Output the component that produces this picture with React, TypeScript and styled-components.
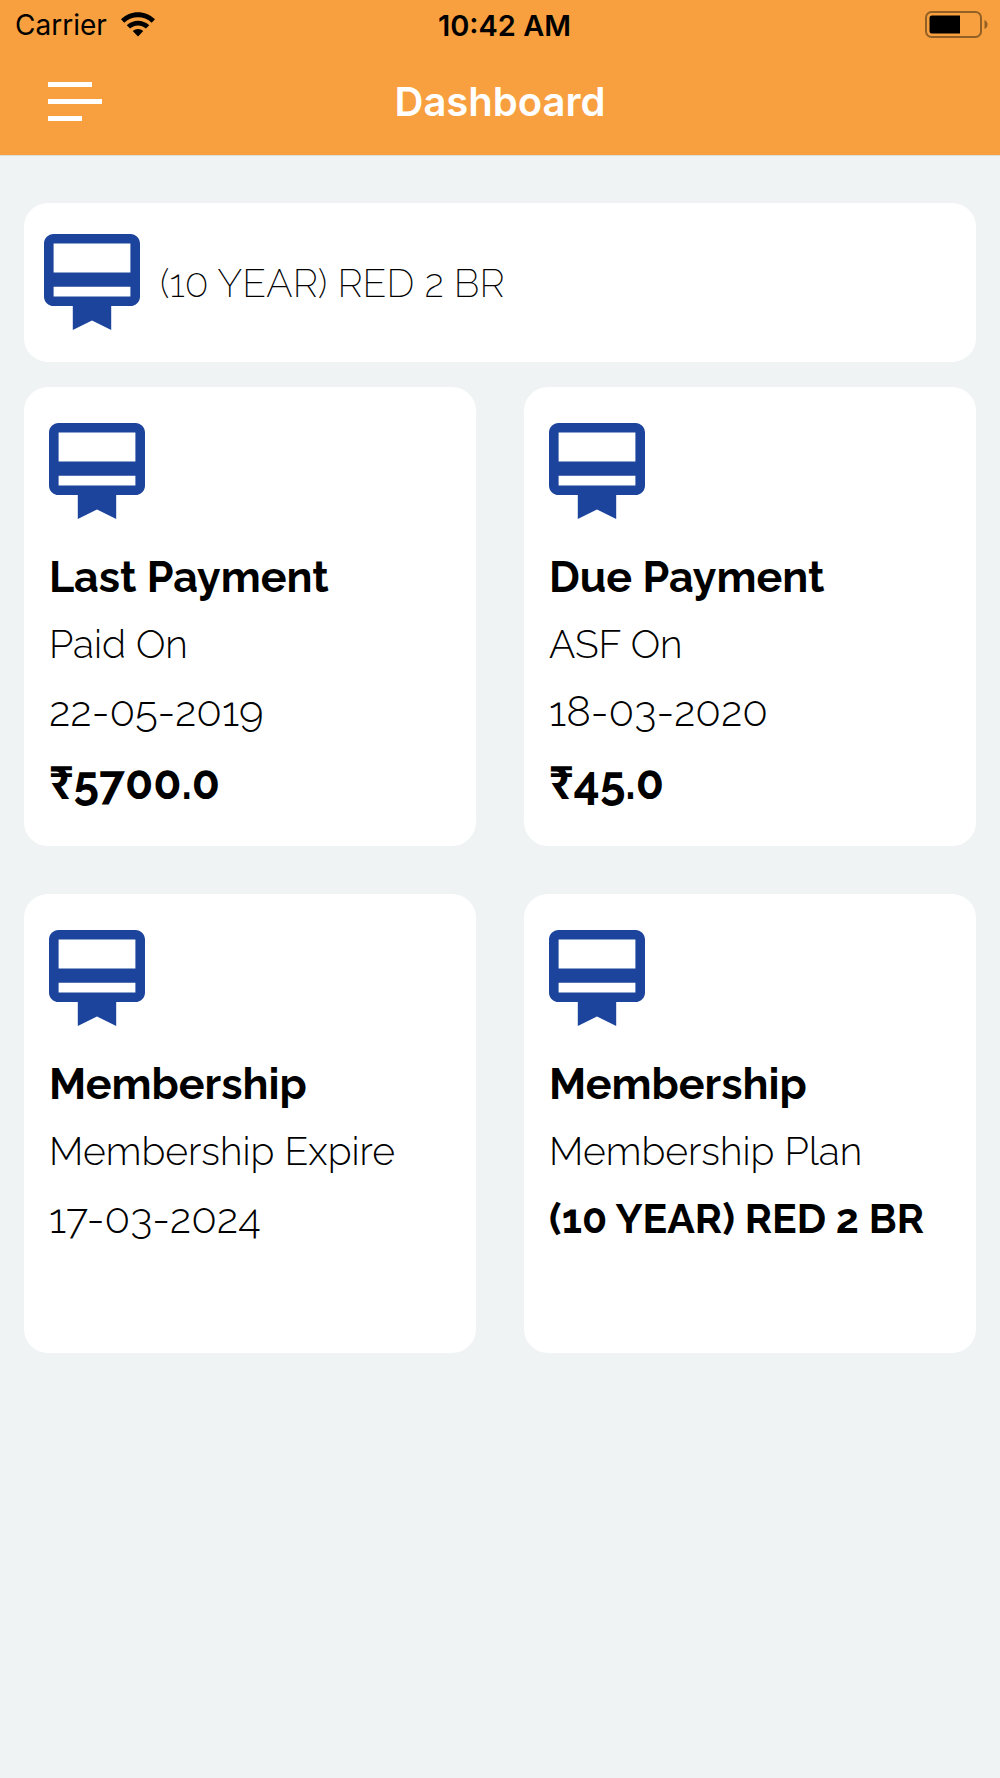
import React from "react";
import styled, { createGlobalStyle } from "styled-components";

const GlobalStyle = createGlobalStyle`
  *, *::before, *::after { box-sizing: border-box; }
  body {
    margin: 0;
    background: #eff3f4;
    color: #000;
    font-family: Raleway, Lato, sans-serif;
  }
`;

const Header = styled.header`
  background: #f8a03f;
  border-bottom: 1px solid #dcdcd9;
  font-family: Inter, sans-serif;
`;

const StatusBar = styled.div`
  display: grid;
  grid-template-columns: 1fr auto 1fr;
  align-items: center;
  height: 48px;
  padding: 2px 12px 0 15px;
  font-size: 28px;
`;

const Carrier = styled.div`
  display: flex;
  align-items: center;
  gap: 14px;
`;

const Clock = styled.time`
  font-size: 29px;
  font-weight: 600;
  padding-left: 6px;
`;

const BatteryIcon = styled.svg`
  justify-self: end;
`;

const NavBar = styled.div`
  display: grid;
  grid-template-columns: 1fr auto 1fr;
  align-items: center;
  height: 107px;
  padding: 0 48px;
`;

const MenuButton = styled.button`
  display: flex;
  flex-direction: column;
  align-items: flex-start;
  gap: 12px;
  width: 54px;
  padding: 0;
  border: 0;
  background: none;
  cursor: pointer;
`;

const MenuLine = styled.span<{ $width: number }>`
  width: ${({ $width }) => $width}px;
  height: 5px;
  background: #fff;
`;

const PageTitle = styled.h1`
  margin: 0;
  color: #fff;
  font-size: 40px;
  font-weight: 600;
  line-height: 48px;
`;

const Content = styled.main`
  display: flex;
  flex-direction: column;
  gap: 25px;
  padding: 47px 24px;
`;

const Panel = styled.section`
  border-radius: 24px;
  background: #fff;
`;

const PlanBanner = styled(Panel)`
  display: flex;
  align-items: center;
  gap: 20px;
  padding: 31px 20px 32px;
`;

const PlanName = styled.p`
  margin: 0;
  padding-top: 2px;
  font-size: 39px;
  font-weight: 200;
  line-height: 48px;
`;

const CardGrid = styled.div`
  display: grid;
  grid-template-columns: 1fr 1fr;
  grid-auto-rows: 1fr;
  gap: 48px;
`;

const Card = styled(Panel)`
  padding: 36px 25px 25px;
`;

const CardTitle = styled.h2`
  margin: 25px 0 0;
  font-size: 43px;
  font-weight: 700;
  line-height: 67px;
`;

const CardText = styled.p`
  margin: 0;
  font-size: 39px;
  font-weight: 300;
  line-height: 67px;
`;

const CardDate = styled(CardText)`
  font-size: 42px;
`;

const CardPlan = styled(CardText)`
  font-size: 41px;
  font-weight: 700;
`;

const CardAmount = styled(CardText)`
  font-size: 46px;
  font-weight: 700;
  line-height: 76px;
`;

const Badge = styled.svg`
  display: block;
  flex: none;
  width: 96px;
  height: 96px;
  fill: #1c449c;
`;

function MembershipIcon() {
  return (
    <Badge viewBox="2 2 20 20" aria-hidden="true">
      <path d="M20 2H4c-1.11 0-2 .89-2 2v11c0 1.11.89 2 2 2h4v5l4-2 4 2v-5h4c1.11 0 2-.89 2-2V4c0-1.11-.89-2-2-2zm0 13H4v-2h16v2zm0-5H4V4h16v6z" />
    </Badge>
  );
}

function WifiIcon() {
  return (
    <svg width="34" height="27" viewBox="0 0 34 27" aria-hidden="true">
      <path d="M0 7.2C9.5-2.2 24.500-2.200 34 7.200L30.700 10.700C23 3.400 11 3.400 3.300 10.700Z" />
      <path d="M5.700 13.200C12.200 7.200 21.800 7.200 28.300 13.200L24.900 16.600C20.300 12.500 13.700 12.500 9.100 16.600Z" />
      <path d="M11.700 19C14.800 16.300 19.200 16.300 22.300 19L17 24.500Z" />
    </svg>
  );
}

function Battery() {
  return (
    <BatteryIcon width="63" height="29" viewBox="0 0 63 29" role="img" aria-label="Battery">
      <rect x="1" y="1" width="55" height="25" rx="5.500" fill="none" stroke="#925f25" strokeWidth="2" />
      <path d="M7 4.500H35V22.500H7Q4.500 22.500 4.500 20V7Q4.500 4.500 7 4.500Z" />
      <path d="M59.500 9Q62.500 10.500 62.500 13.500T59.500 18Z" fill="#925f25" />
    </BatteryIcon>
  );
}

export default function App() {
  return (
    <>
      <GlobalStyle />
      <Header>
        <StatusBar>
          <Carrier>
            <span>Carrier</span>
            <WifiIcon />
          </Carrier>
          <Clock>10:42 AM</Clock>
          <Battery />
        </StatusBar>
        <NavBar>
          <MenuButton type="button" aria-label="Open menu">
            <MenuLine $width={44} />
            <MenuLine $width={54} />
            <MenuLine $width={34} />
          </MenuButton>
          <PageTitle>Dashboard</PageTitle>
        </NavBar>
      </Header>
      <Content>
        <PlanBanner>
          <MembershipIcon />
          <PlanName>(10 YEAR) RED 2 BR</PlanName>
        </PlanBanner>
        <CardGrid>
          <Card>
            <MembershipIcon />
            <CardTitle>Last Payment</CardTitle>
            <CardText>Paid On</CardText>
            <CardDate>22-05-2019</CardDate>
            <CardAmount>₹5700.0</CardAmount>
          </Card>
          <Card>
            <MembershipIcon />
            <CardTitle>Due Payment</CardTitle>
            <CardText>ASF On</CardText>
            <CardDate>18-03-2020</CardDate>
            <CardAmount>₹45.0</CardAmount>
          </Card>
          <Card>
            <MembershipIcon />
            <CardTitle>Membership</CardTitle>
            <CardText>Membership Expire</CardText>
            <CardDate>17-03-2024</CardDate>
          </Card>
          <Card>
            <MembershipIcon />
            <CardTitle>Membership</CardTitle>
            <CardText>Membership Plan</CardText>
            <CardPlan>(10 YEAR) RED 2 BR</CardPlan>
          </Card>
        </CardGrid>
      </Content>
    </>
  );
}
